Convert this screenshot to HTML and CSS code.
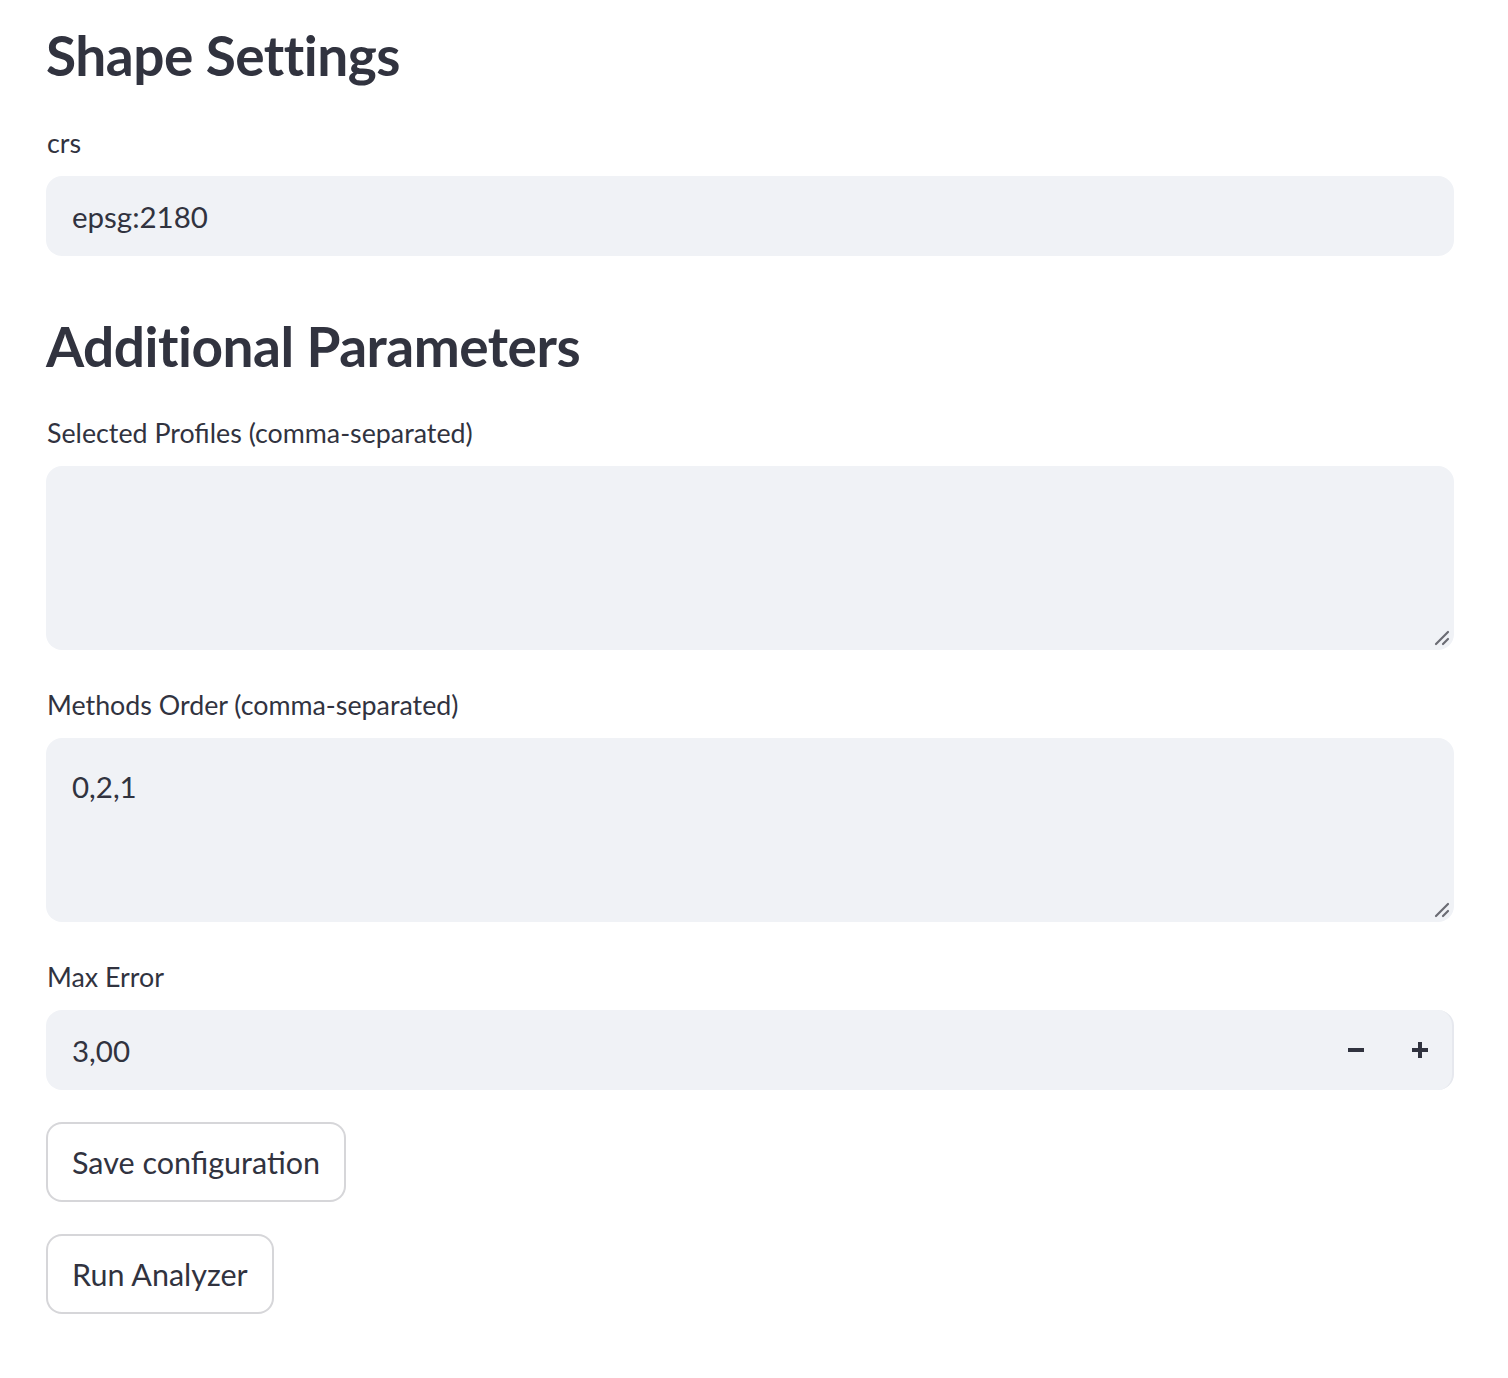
FILE: index.html
```html
<!DOCTYPE html>
<html lang="en">
<head>
<meta charset="utf-8">
<title>Shape Settings</title>
<link rel="stylesheet" href="styles.css">
</head>
<body>
<main class="page">
  <h2 class="heading heading-first">Shape Settings</h2>
  <div class="field field-top">
    <label class="label">crs</label>
    <div class="input">epsg:2180</div>
  </div>

  <h2 class="heading heading-next">Additional Parameters</h2>
  <div class="field field-first">
    <label class="label">Selected Profiles (comma-separated)</label>
    <div class="textarea">
      <span class="textarea-text"></span>
      <svg class="grip" width="16" height="16" viewBox="0 0 16 16"><path d="M2 14 L14 2 M9 14 L14 9" stroke="#6b6c74" stroke-width="2.2" stroke-linecap="round" fill="none"/></svg>
    </div>
  </div>

  <div class="field field-gap">
    <label class="label">Methods Order (comma-separated)</label>
    <div class="textarea">
      <span class="textarea-text">0,2,1</span>
      <svg class="grip" width="16" height="16" viewBox="0 0 16 16"><path d="M2 14 L14 2 M9 14 L14 9" stroke="#6b6c74" stroke-width="2.2" stroke-linecap="round" fill="none"/></svg>
    </div>
  </div>

  <div class="field field-gap">
    <label class="label">Max Error</label>
    <div class="input number">
      <span class="number-value">3,00</span>
      <div class="steppers">
        <span class="step"><svg width="20" height="20" viewBox="0 0 20 20"><path d="M2 10 H18" stroke="#31333f" stroke-width="4"/></svg></span>
        <span class="step"><svg width="20" height="20" viewBox="0 0 20 20"><path d="M2 10 H18 M10 2 V18" stroke="#31333f" stroke-width="4"/></svg></span>
      </div>
    </div>
  </div>

  <div class="buttons">
    <button class="btn">Save configuration</button>
    <button class="btn">Run Analyzer</button>
  </div>
</main>
</body>
</html>
```

FILE: styles.css
```css
* { box-sizing: border-box; }

html, body {
  margin: 0;
  background: #ffffff;
}

body {
  font-family: "Lato", "Noto Sans", sans-serif;
  color: #31333f;
}

.page {
  width: 1408px;
  margin-left: 46px;
  padding-top: 21px;
  display: flex;
  flex-direction: column;
}

.heading {
  margin: 0;
  font-size: 55px;
  font-weight: 700;
  line-height: 68px;
  color: #31333f;
  letter-spacing: -0.5px;
}

.heading-next { margin-top: 56px; }

.field {
  display: flex;
  flex-direction: column;
}

.field-top { margin-top: 35px; }

.field-first { margin-top: 34px; }

.field-gap { margin-top: 36px; }

.label {
  font-size: 26.8px;
  line-height: 42px;
  height: 42px;
  margin-bottom: 10px;
  padding-left: 1px;
  position: relative;
  top: -2px;
}

.input {
  height: 80px;
  background: #f0f2f6;
  border-radius: 16px;
  display: flex;
  align-items: center;
  padding-left: 26px;
  font-size: 29.5px;
}

.textarea {
  position: relative;
  height: 184px;
  background: #f0f2f6;
  border-radius: 16px;
  padding: 27px 26px;
  font-size: 29.5px;
  line-height: 44px;
}

.grip {
  position: absolute;
  right: 4px;
  bottom: 4px;
}

.number {
  justify-content: space-between;
  padding-right: 0;
  border-right: 2px solid #e6e8ee;
}

.steppers {
  display: flex;
  height: 100%;
}

.step {
  width: 64px;
  height: 100%;
  display: flex;
  align-items: center;
  justify-content: center;
}

.buttons {
  display: flex;
  flex-direction: column;
  align-items: flex-start;
  gap: 32px;
  margin-top: 32px;
}

.btn {
  height: 80px;
  padding: 0 24px;
  font-family: inherit;
  font-size: 30.5px;
  color: #31333f;
  background: #ffffff;
  border: 2px solid rgba(49, 51, 63, 0.2);
  border-radius: 16px;
}
```
